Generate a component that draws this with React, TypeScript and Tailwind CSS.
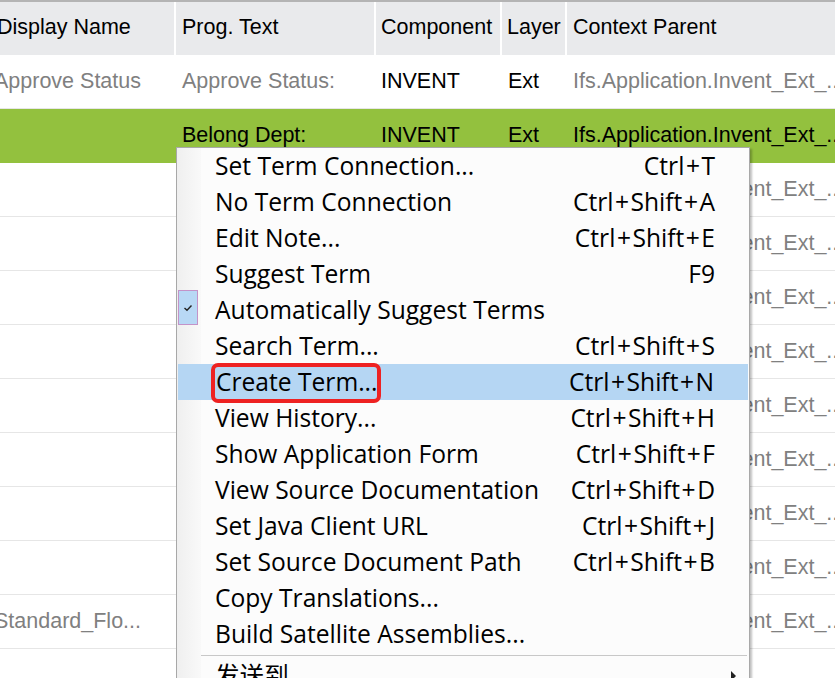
import React from "react";

const CTX = "Ifs.Application.Invent_Ext_...";

type Row = {
  c1: string;
  c2: string;
  c3: string;
  c4: string;
  c5: string;
  sel?: boolean;
};

const rows: Row[] = [
  { c1: "Approve Status", c2: "Approve Status:", c3: "INVENT", c4: "Ext", c5: CTX },
  { c1: "", c2: "Belong Dept:", c3: "INVENT", c4: "Ext", c5: CTX, sel: true },
  { c1: "", c2: "", c3: "", c4: "", c5: CTX },
  { c1: "", c2: "", c3: "", c4: "", c5: CTX },
  { c1: "", c2: "", c3: "", c4: "", c5: CTX },
  { c1: "", c2: "", c3: "", c4: "", c5: CTX },
  { c1: "", c2: "", c3: "", c4: "", c5: CTX },
  { c1: "", c2: "", c3: "", c4: "", c5: CTX },
  { c1: "", c2: "", c3: "", c4: "", c5: CTX },
  { c1: "", c2: "", c3: "", c4: "", c5: CTX },
  { c1: "Standard_Flo...", c2: "", c3: "", c4: "", c5: CTX },
  { c1: "", c2: "", c3: "", c4: "", c5: "" },
];

const menuItems: { label: string; key?: string; checked?: boolean; active?: boolean }[] = [
  { label: "Set Term Connection...", key: "Ctrl+T" },
  { label: "No Term Connection", key: "Ctrl+Shift+A" },
  { label: "Edit Note...", key: "Ctrl+Shift+E" },
  { label: "Suggest Term", key: "F9" },
  { label: "Automatically Suggest Terms", checked: true },
  { label: "Search Term...", key: "Ctrl+Shift+S" },
  { label: "Create Term...", key: "Ctrl+Shift+N", active: true },
  { label: "View History...", key: "Ctrl+Shift+H" },
  { label: "Show Application Form", key: "Ctrl+Shift+F" },
  { label: "View Source Documentation", key: "Ctrl+Shift+D" },
  { label: "Set Java Client URL", key: "Ctrl+Shift+J" },
  { label: "Set Source Document Path", key: "Ctrl+Shift+B" },
  { label: "Copy Translations..." },
  { label: "Build Satellite Assemblies..." },
];

function Cell({ w, children, cls = "" }: { w: string; children?: React.ReactNode; cls?: string }) {
  return (
    <div className={`${w} shrink-0 h-full flex items-center overflow-hidden whitespace-nowrap ${cls}`}>
      {children}
    </div>
  );
}

function Shortcut({ k }: { k: string }) {
  const parts = k.split("+");
  return (
    <span className="ml-auto whitespace-nowrap flex items-center">
      {parts.map((p, i) => (
        <React.Fragment key={i}>
          {i > 0 && <span className="px-[1.5px]">+</span>}
          <span>{p}</span>
        </React.Fragment>
      ))}
    </span>
  );
}

export default function App() {
  return (
    <div
      className="relative w-[835px] h-[678px] overflow-hidden bg-white"
      style={{ fontFamily: '"Liberation Sans", Arial, sans-serif' }}
    >
      {/* Table */}
      <div className="-ml-[10px] w-[845px] text-[21.5px]">
        {/* Header */}
        <div className="h-[55px] flex bg-[#e9eaec] border-t-2 border-[#b4b4b4] text-black">
          <Cell w="w-[186px]" cls="pl-[7px] pb-[3px] border-r-2 border-white">Display Name</Cell>
          <Cell w="w-[200px]" cls="pl-[6px] pb-[3px] border-r-2 border-white">Prog. Text</Cell>
          <Cell w="w-[126px]" cls="pl-[5px] pb-[3px] border-r-2 border-white">Component</Cell>
          <Cell w="w-[65px]" cls="pl-[5px] pb-[3px] border-r-2 border-white">Layer</Cell>
          <Cell w="flex-1" cls="pl-[6px] pb-[3px]">Context Parent</Cell>
        </div>
        {rows.map((r, i) => (
          <div
            key={i}
            className={`h-[54px] flex border-b ${
              r.sel ? "bg-[#93c13e] text-black border-[#93c13e]" : "bg-white border-[#e6e6e6]"
            }`}
          >
            <Cell w="w-[186px]" cls={`pl-[4px] ${r.sel ? "" : "text-[#808080]"}`}>{r.c1}</Cell>
            <Cell w="w-[200px]" cls={`pl-[6px] ${r.sel ? "" : "text-[#808080]"}`}>{r.c2}</Cell>
            <Cell w="w-[126px]" cls="pl-[5px] text-black">{r.c3}</Cell>
            <Cell w="w-[65px]" cls="pl-[6px] text-black">{r.c4}</Cell>
            <Cell w="flex-1" cls={`pl-[6px] ${r.sel ? "text-black" : "text-[#808080]"}`}>{r.c5}</Cell>
          </div>
        ))}
      </div>

      {/* Context menu */}
      <div
        className="absolute left-[176px] top-[147px] w-[574px] bg-[#fcfcfc] border border-[#a8a8a8] shadow-[2px_2px_2px_rgba(0,0,0,0.25)] text-[24.6px] text-black"
        style={{ fontFamily: '"Open Sans", "Noto Sans CJK SC", sans-serif' }}
      >
        <div className="relative">
          {/* gutter */}
          <div className="absolute left-0 top-0 bottom-0 w-[24px] bg-gradient-to-r from-[#efefef] to-[#f9f9f9]" />
          {menuItems.map((m, i) => (
            <div
              key={i}
              className={`relative h-[36px] flex items-center pl-[38px] pr-[34px] ${
                m.active ? "bg-[#b5d6f3] mx-[1px] pl-[37px] pr-[33px]" : ""
              }`}
            >
              {m.checked && (
                <div className="absolute left-[1px] top-[-2px] w-[20px] h-[35px] bg-[#b8d8f5] border border-[#c393c8] flex items-center justify-center">
                  <svg width="10" height="8" viewBox="0 0 10 8">
                    <path d="M1.5 4 L4 6.3 L8.5 1.5" fill="none" stroke="#222" strokeWidth="1.4" />
                  </svg>
                </div>
              )}
              <span className="relative whitespace-nowrap">
                {m.label}
                {m.active && (
                  <span className="absolute left-[-5px] right-[-3px] top-[-1px] bottom-[-3px] border-[4px] border-[#ee2222] rounded-[7px]" />
                )}
              </span>
              {m.key && <Shortcut k={m.key} />}
            </div>
          ))}
          <div className="h-[6px] flex items-center pl-[24px] pr-[2px]">
            <div className="h-px w-full bg-[#c8c8c8]" />
          </div>
          <div className="relative h-[36px] flex items-center pl-[38px] pr-[34px]">
            <span className="whitespace-nowrap">发送到</span>
            <svg className="ml-auto -mr-[22px]" width="6" height="10" viewBox="0 0 6 10">
              <path d="M0 0 L5 5 L0 10 Z" fill="#222" />
            </svg>
          </div>
        </div>
      </div>
    </div>
  );
}
